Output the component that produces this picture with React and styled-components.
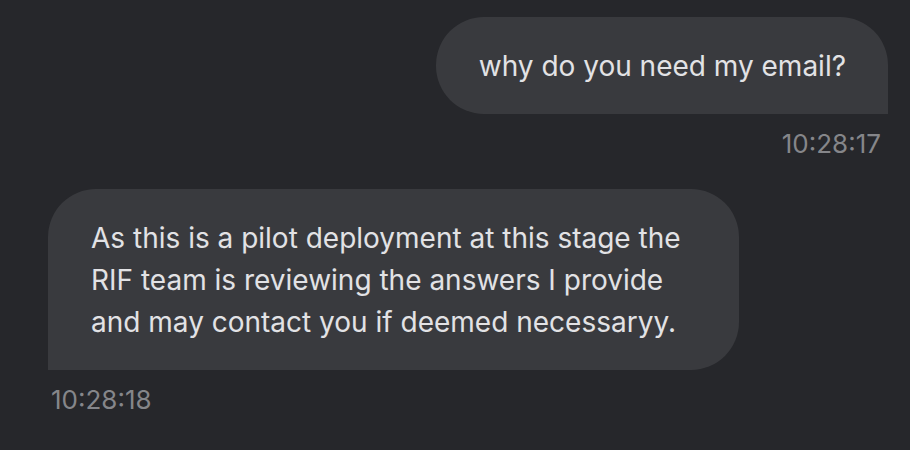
import React from "react";
import styled, { createGlobalStyle } from "styled-components";

const GlobalStyle = createGlobalStyle`
  html, body {
    margin: 0;
    padding: 0;
    background: #26272b;
  }
  body {
    font-family: Inter, "Noto Sans", sans-serif;
    -webkit-font-smoothing: antialiased;
  }
`;

const messages = [
  { id: 1, from: "user", text: "why do you need my email?", time: "10:28:17" },
  {
    id: 2,
    from: "bot",
    text: "As this is a pilot deployment at this stage the RIF team is reviewing the answers I provide and may contact you if deemed necessaryy.",
    time: "10:28:18",
  },
];

const App = () => {
  return (
    <>
      <GlobalStyle />
      <ChatWrapper>
        {messages.map((msg) => (
          <MessageRow key={msg.id} from={msg.from}>
            <Bubble from={msg.from}>{msg.text}</Bubble>
            <Time from={msg.from}>{msg.time}</Time>
          </MessageRow>
        ))}
      </ChatWrapper>
    </>
  );
};

const ChatWrapper = styled.div`
  width: 910px;
  height: 450px;
  box-sizing: border-box;
  padding: 17px 22px 0 48px;
  display: flex;
  flex-direction: column;
  gap: 30px;
  overflow: hidden;
`;

const MessageRow = styled.div`
  display: flex;
  flex-direction: column;
  align-items: ${(props) => (props.from === "user" ? "flex-end" : "flex-start")};
`;

const Bubble = styled.div`
  box-sizing: border-box;
  max-width: 691px;
  background: #393a3e;
  color: #e2e2e5;
  font-size: 28px;
  line-height: 42px;
  padding: 28px 42px 27px 43px;
  border-radius: ${(props) =>
    props.from === "user" ? "48px 48px 0 48px" : "48px 48px 48px 0"};
`;

const Time = styled.div`
  color: #85868a;
  font-size: 26px;
  line-height: 30px;
  margin-top: 15px;
  padding: ${(props) => (props.from === "user" ? "0 7px 0 0" : "0 0 0 3px")};
`;

export default App;
